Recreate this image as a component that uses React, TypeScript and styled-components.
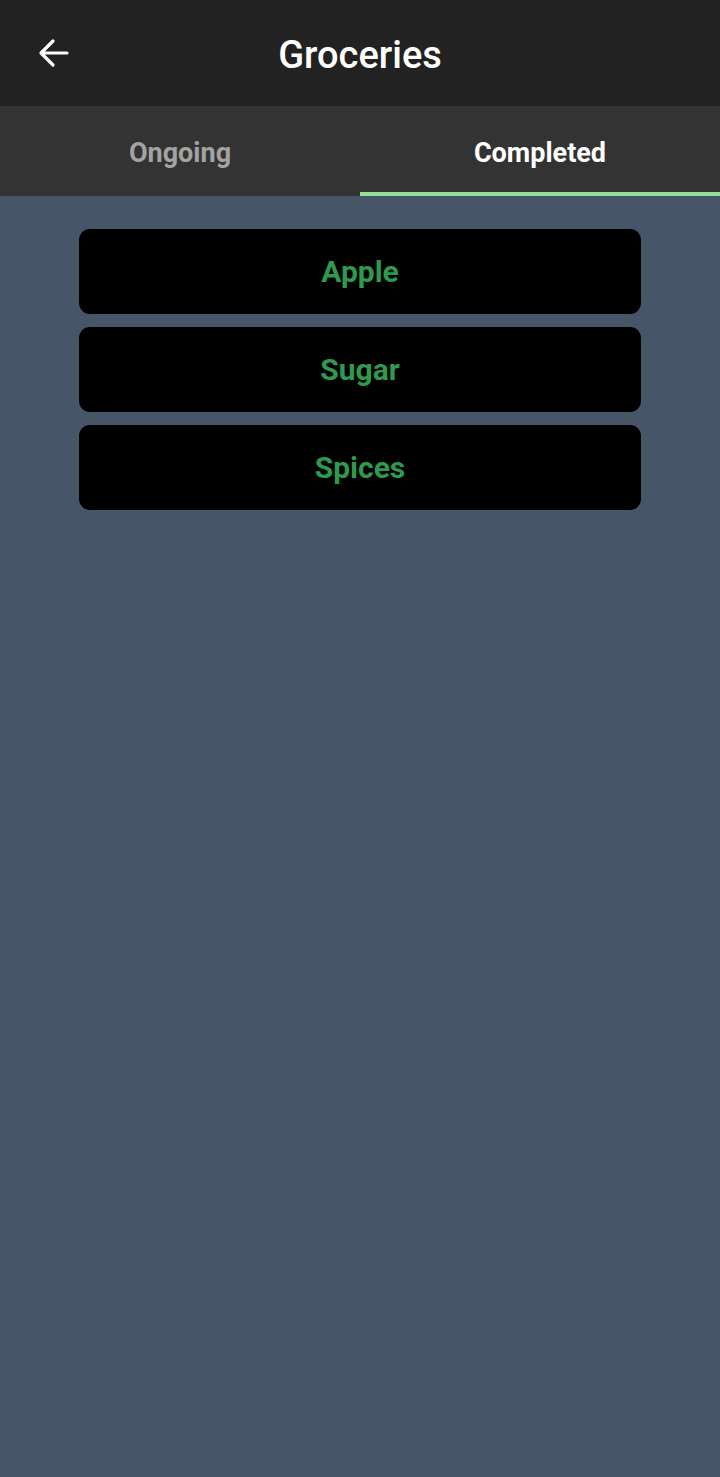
import { FC } from "react";
import styled, { createGlobalStyle } from "styled-components";

const GlobalStyle = createGlobalStyle`
  html, body {
    margin: 0;
    padding: 0;
    background: #475569;
  }
  * {
    box-sizing: border-box;
  }
`;

const Screen = styled.div`
  min-height: 1477px;
  background: #475569;
  font-family: Roboto, "Noto Sans", sans-serif;
`;

const Header = styled.header`
  height: 106px;
  background: #222222;
  display: grid;
  grid-template-columns: 90px 1fr 90px;
  align-items: center;
`;

const BackButton = styled.button`
  width: 90px;
  height: 106px;
  padding: 0 0 0 38px;
  border: none;
  background: transparent;
  display: flex;
  align-items: center;
  cursor: pointer;
`;

const Title = styled.h1`
  margin: 0;
  padding-top: 4px;
  text-align: center;
  color: #ffffff;
  font-size: 38px;
  font-weight: 500;
`;

const Tabs = styled.nav`
  height: 90px;
  background: #333333;
  display: grid;
  grid-template-columns: 1fr 1fr;
`;

const Tab = styled.div<{ $active?: boolean }>`
  display: flex;
  align-items: center;
  justify-content: center;
  font-size: 27px;
  font-weight: 700;
  color: ${(p) => (p.$active ? "#ffffff" : "#a3a3a3")};
  border-bottom: 4px solid ${(p) => (p.$active ? "#98df98" : "transparent")};
  padding-top: 7px;
`;

const List = styled.div`
  display: flex;
  flex-direction: column;
  align-items: center;
  gap: 13px;
  padding-top: 33px;
`;

const Item = styled.div`
  width: 562px;
  height: 85px;
  border-radius: 11px;
  background: #000000;
  display: flex;
  align-items: center;
  justify-content: center;
  color: #2e9a4e;
  font-size: 30px;
  font-weight: 700;
`;

const BackArrow: FC = () => (
  <svg width="31" height="30" viewBox="0 0 31 30" fill="none">
    <path d="M29 15H3M15 3L3 15l12 12" stroke="#ffffff" strokeWidth="3.2" strokeLinecap="round" strokeLinejoin="round" />
  </svg>
);

const items = ["Apple", "Sugar", "Spices"];

export default function App() {
  return (
    <>
      <GlobalStyle />
      <Screen>
        <Header>
          <BackButton aria-label="Back">
            <BackArrow />
          </BackButton>
          <Title>Groceries</Title>
          <div />
        </Header>
        <Tabs>
          <Tab>Ongoing</Tab>
          <Tab $active>Completed</Tab>
        </Tabs>
        <List>
          {items.map((name) => (
            <Item key={name}>{name}</Item>
          ))}
        </List>
      </Screen>
    </>
  );
}
